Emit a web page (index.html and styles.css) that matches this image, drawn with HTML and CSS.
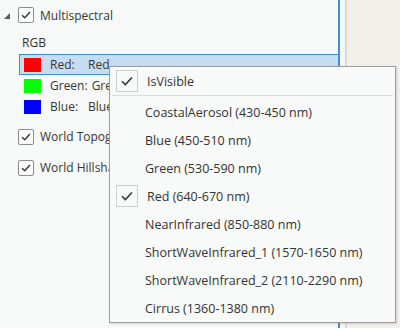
FILE: index.html
```html
<!DOCTYPE html>
<html lang="en">
<head>
    <meta charset="UTF-8">
    <title>Contents - Multispectral</title>
    <link rel="stylesheet" href="styles.css">
</head>
<body>
    <div class="app">
        <div class="pane">
            <div class="row layer">
                <span class="expander"></span>
                <span class="check"><svg viewBox="0 0 16 16"><path d="M3.5 8.2 L6.6 11.2 L12.5 4.6"/></svg></span>
                <span class="label">Multispectral</span>
            </div>
            <div class="row group">RGB</div>
            <div class="row band selected">
                <span class="swatch red"></span>
                <span class="band-name">Red:</span>
                <span class="label">Red</span>
            </div>
            <div class="row band">
                <span class="swatch green"></span>
                <span class="band-name">Green:</span>
                <span class="label">Green</span>
            </div>
            <div class="row band">
                <span class="swatch blue"></span>
                <span class="band-name">Blue:</span>
                <span class="label">Blue</span>
            </div>
            <div class="row layer basemap">
                <span class="check"><svg viewBox="0 0 16 16"><path d="M3.5 8.2 L6.6 11.2 L12.5 4.6"/></svg></span>
                <span class="label">World Topographic Map</span>
            </div>
            <div class="row layer basemap">
                <span class="check"><svg viewBox="0 0 16 16"><path d="M3.5 8.2 L6.6 11.2 L12.5 4.6"/></svg></span>
                <span class="label">World Hillshade</span>
            </div>
        </div>
        <div class="splitter"></div>
        <div class="side"></div>

        <div class="menu">
            <div class="menu-item">
                <span class="menu-check"><svg viewBox="0 0 20 20"><path d="M5 10.2 L8.4 13.6 L15 6.6"/></svg></span>
                IsVisible
            </div>
            <div class="menu-sep"></div>
            <div class="menu-item"><span class="menu-gutter"></span>CoastalAerosol (430-450 nm)</div>
            <div class="menu-item"><span class="menu-gutter"></span>Blue (450-510 nm)</div>
            <div class="menu-item"><span class="menu-gutter"></span>Green (530-590 nm)</div>
            <div class="menu-item">
                <span class="menu-check"><svg viewBox="0 0 20 20"><path d="M5 10.2 L8.4 13.6 L15 6.6"/></svg></span>
                Red (640-670 nm)
            </div>
            <div class="menu-item"><span class="menu-gutter"></span>NearInfrared (850-880 nm)</div>
            <div class="menu-item"><span class="menu-gutter"></span>ShortWaveInfrared_1 (1570-1650 nm)</div>
            <div class="menu-item"><span class="menu-gutter"></span>ShortWaveInfrared_2 (2110-2290 nm)</div>
            <div class="menu-item"><span class="menu-gutter"></span>Cirrus (1360-1380 nm)</div>
        </div>
    </div>
</body>
</html>
```

FILE: styles.css
```css
body {
    margin: 0;
    font-family: "Open Sans", "Noto Sans", Arial, sans-serif;
    font-size: 12px;
    color: #363636;
    background-color: #f1f0ea;
}
.app {
    position: relative;
    display: flex;
    width: 400px;
    height: 328px;
    overflow: hidden;
}
.pane {
    width: 338px;
    background-color: #f7f8f8;
    border-right: 2px solid #3b8fd8;
    overflow: hidden;
}
.splitter {
    width: 5px;
    background-color: #f5f6f6;
    border-right: 2px solid #d9d9d9;
}
.side {
    flex: 1;
    background-color: #f1f0ea;
}
.row {
    display: flex;
    align-items: center;
    white-space: nowrap;
}
.layer {
    height: 30px;
}
.expander {
    width: 0;
    height: 0;
    margin-left: 4px;
    margin-right: 8px;
    margin-top: 2px;
    border-left: 6px solid transparent;
    border-bottom: 6px solid #5a5a5a;
}
.check {
    width: 14px;
    height: 14px;
    border: 1px solid #8c8c8c;
    border-radius: 2px;
    background-color: #fff;
    margin-right: 6px;
    display: flex;
}
.check svg {
    width: 14px;
    height: 14px;
}
.check path {
    fill: none;
    stroke: #333;
    stroke-width: 1.6;
}
.group {
    height: 24px;
    padding-left: 22px;
    color: #333;
}
.band {
    box-sizing: border-box;
    height: 21px;
    margin-left: 19px;
    padding-left: 4px;
    border: 1px solid transparent;
    border-right: none;
}
.band.selected {
    background-color: #c6dcf0;
    border-color: #3b8fd8;
}
.swatch {
    width: 17px;
    height: 14px;
    margin-right: 9px;
}
.swatch.red {
    background-color: #ff0000;
}
.swatch.green {
    background-color: #00ff00;
}
.swatch.blue {
    background-color: #0000ff;
}
.band-name {
    min-width: 34px;
    padding-right: 4px;
}
.basemap {
    height: 31px;
    margin-left: 18px;
}
.band + .basemap {
    margin-top: 4px;
}
.menu {
    position: absolute;
    left: 109px;
    top: 66px;
    width: 285px;
    height: 255px;
    background-color: #f8f9f9;
    border: 1px solid #9c9c9c;
    box-shadow: 1px 1px 2px rgba(0, 0, 0, 0.15);
    color: #333;
    font-size: 12.5px;
}
.menu-item {
    display: flex;
    align-items: center;
    height: 28px;
    white-space: nowrap;
}
.menu-gutter {
    width: 35px;
}
.menu-check {
    width: 20px;
    height: 20px;
    margin-left: 6px;
    margin-right: 9px;
    border: 1px solid #cfcfcf;
    display: flex;
}
.menu-check svg {
    width: 20px;
    height: 20px;
}
.menu-check path {
    fill: none;
    stroke: #333;
    stroke-width: 1.5;
}
.menu-sep {
    height: 1px;
    margin: 0 2px 2px 2px;
    background-color: #dcdcdc;
}
```
